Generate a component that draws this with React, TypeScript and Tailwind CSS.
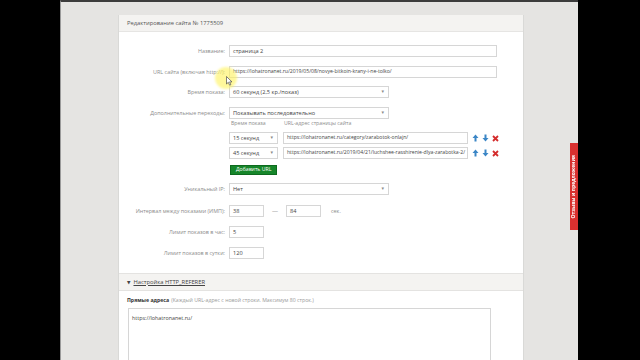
const font = { fontFamily: '"Open Sans", "DejaVu Sans", sans-serif' }

function Field({ w, children, select, small }: { w: string; children: React.ReactNode; select?: boolean; small?: boolean }) {
  return (
    <div className={`${w} h-[12px] border border-[#d6d6d6] bg-white px-[3px] flex items-center justify-between ${small ? 'text-[5.1px]' : 'text-[5.6px]'} text-[#444] whitespace-nowrap overflow-hidden`}>
      <span>{children}</span>
      {select && <span className="text-[5px] text-[#888] pr-[1px]">▾</span>}
    </div>
  )
}

function Row({ label, mt, children }: { label: string; mt: string; children: React.ReactNode }) {
  return (
    <div className={`flex items-center gap-[4px] ${mt}`}>
      <div className="w-[106px] shrink-0 text-right text-[5.4px] text-[#8c8c8c] whitespace-nowrap">{label}</div>
      {children}
    </div>
  )
}

function Arrow({ down }: { down?: boolean }) {
  return (
    <svg width="7" height="8" viewBox="0 0 7 8" className={down ? 'rotate-180' : ''}>
      <path d="M3.5 0.5 L6.5 4 L4.5 4 L4.5 7.5 L2.5 7.5 L2.5 4 L0.5 4 Z" fill="#3b86c6" />
    </svg>
  )
}

function Cross() {
  return (
    <svg width="7" height="7" viewBox="0 0 7 7">
      <path d="M1 1 L6 6 M6 1 L1 6" stroke="#d42c2c" strokeWidth="1.8" />
    </svg>
  )
}

function UrlRow({ time, url, mt }: { time: string; url: string; mt: string }) {
  return (
    <div className={`flex items-center ${mt}`}>
      <div className="w-[110px] shrink-0" />
      <Field w="w-[49px]" select>{time}</Field>
      <div className="w-[5px]" />
      <Field w="w-[185px]" small>{url}</Field>
      <div className="flex items-center gap-[3px] ml-[4px]">
        <Arrow />
        <Arrow down />
        <Cross />
      </div>
    </div>
  )
}

export default function App() {
  return (
    <div className="w-[640px] h-[360px] bg-black flex overflow-hidden relative" style={font}>
      <div className="w-[60px] shrink-0" />

      {/* Page area */}
      <div className="w-[518px] shrink-0 h-full bg-[#e5e4e2] border-t-2 border-[#3c3c3c] border-l border-l-[#9a9a9a] pt-[13px] pl-[57px]">
        <div className="w-[406px] h-[400px] bg-white border-x border-[#d9d9d7]">
          {/* Header */}
          <div className="h-[17px] bg-[#f4f3f1] border-b border-[#e6e5e3] flex items-center pl-[8px] text-[5.8px] text-[#555]">
            Редактирование сайта № 1775509
          </div>

          <div className="pt-[13px]">
            <Row label="Название:" mt="mt-0">
              <Field w="w-[268px]">страница 2</Field>
            </Row>
            <Row label="URL сайта (включая http://):" mt="mt-[9px]">
              <Field w="w-[268px]" small>https://lohatronanet.ru/2019/05/08/novye-bitkoin-krany-i-ne-tolko/</Field>
            </Row>
            <Row label="Время показа:" mt="mt-[8px]">
              <Field w="w-[160px]" select>60 секунд (2,5 кр./показ)</Field>
            </Row>
            <Row label="Дополнительные переходы:" mt="mt-[9px]">
              <Field w="w-[160px]" select>Показывать последовательно</Field>
            </Row>

            <div className="flex items-center mt-[1px] h-[8px] text-[5.2px] text-[#8c8c8c]">
              <div className="w-[112px] shrink-0" />
              <div className="w-[53px]">Время показа</div>
              <div>URL-адрес страницы сайта</div>
            </div>
            <UrlRow time="15 секунд" url="https://lohatronanet.ru/category/zarabotok-onlajn/" mt="mt-[4px]" />
            <UrlRow time="45 секунд" url="https://lohatronanet.ru/2019/04/21/luchshee-rasshirenie-dlya-zarabotka-2/" mt="mt-[3px]" />
            <div className="flex mt-[6px]">
              <div className="w-[111px] shrink-0" />
              <div className="h-[10px] px-[5px] bg-[#16862a] border border-[#0e6a1e] text-white text-[5.2px] flex items-center">Добавить URL</div>
            </div>

            <Row label="Уникальный IP:" mt="mt-[8px]">
              <Field w="w-[160px]" select>Нет</Field>
            </Row>
            <Row label="Интервал между показами (ИМП):" mt="mt-[10px]">
              <Field w="w-[35px]">38</Field>
              <span className="text-[6px] text-[#888] mx-[4px]">—</span>
              <Field w="w-[35px]">84</Field>
              <span className="text-[5.4px] text-[#888] ml-[6px]">сек.</span>
            </Row>
            <Row label="Лимит показов в час:" mt="mt-[9px]">
              <Field w="w-[35px]">5</Field>
            </Row>
            <Row label="Лимит показов в сутки:" mt="mt-[9px]">
              <Field w="w-[35px]">120</Field>
            </Row>
          </div>

          {/* HTTP_REFERER section */}
          <div className="mt-[14px] h-[18px] bg-[#f4f3f1] border-y border-[#e4e3e1] flex items-center pl-[8px] gap-[3px] text-[5.8px] text-[#444]">
            <span className="text-[4.5px]">▼</span>
            <span className="underline">Настройка HTTP_REFERER</span>
          </div>
          <div className="pl-[8px] mt-[6px] h-[8px] flex items-center text-[5.2px] whitespace-nowrap">
            <span className="font-bold text-[#333]">Прямые адреса</span>
            <span className="text-[#999] ml-[2px]">(Каждый URL-адрес с новой строки. Максимум 80 строк.)</span>
          </div>
          <div className="ml-[9px] mt-[3px] w-[363px] h-[80px] border border-[#d6d6d6] px-[3px] pt-[5px] text-[5.4px] text-[#444]">
            https://lohatronanet.ru/
          </div>
        </div>
      </div>

      {/* Feedback tab */}
      <div className="absolute left-[570px] top-[143px] w-[8px] h-[87px] bg-[#d9302f] flex items-center justify-center">
        <span className="[writing-mode:vertical-rl] rotate-180 text-white text-[5px] font-bold whitespace-nowrap">Отзывы и предложения</span>
      </div>

      {/* Cursor highlight */}
      <div className="absolute left-[215px] top-[67px] w-[22px] h-[22px] rounded-full bg-[#fff35a] opacity-60 blur-[1px]" />
      <svg className="absolute left-[226px] top-[76px]" width="7" height="10" viewBox="0 0 7 10">
        <path d="M0.5 0.5 L0.5 8 L2.3 6.3 L3.6 9.2 L4.8 8.7 L3.6 5.9 L6 5.9 Z" fill="#fff" stroke="#333" strokeWidth="0.6" />
      </svg>
    </div>
  )
}
